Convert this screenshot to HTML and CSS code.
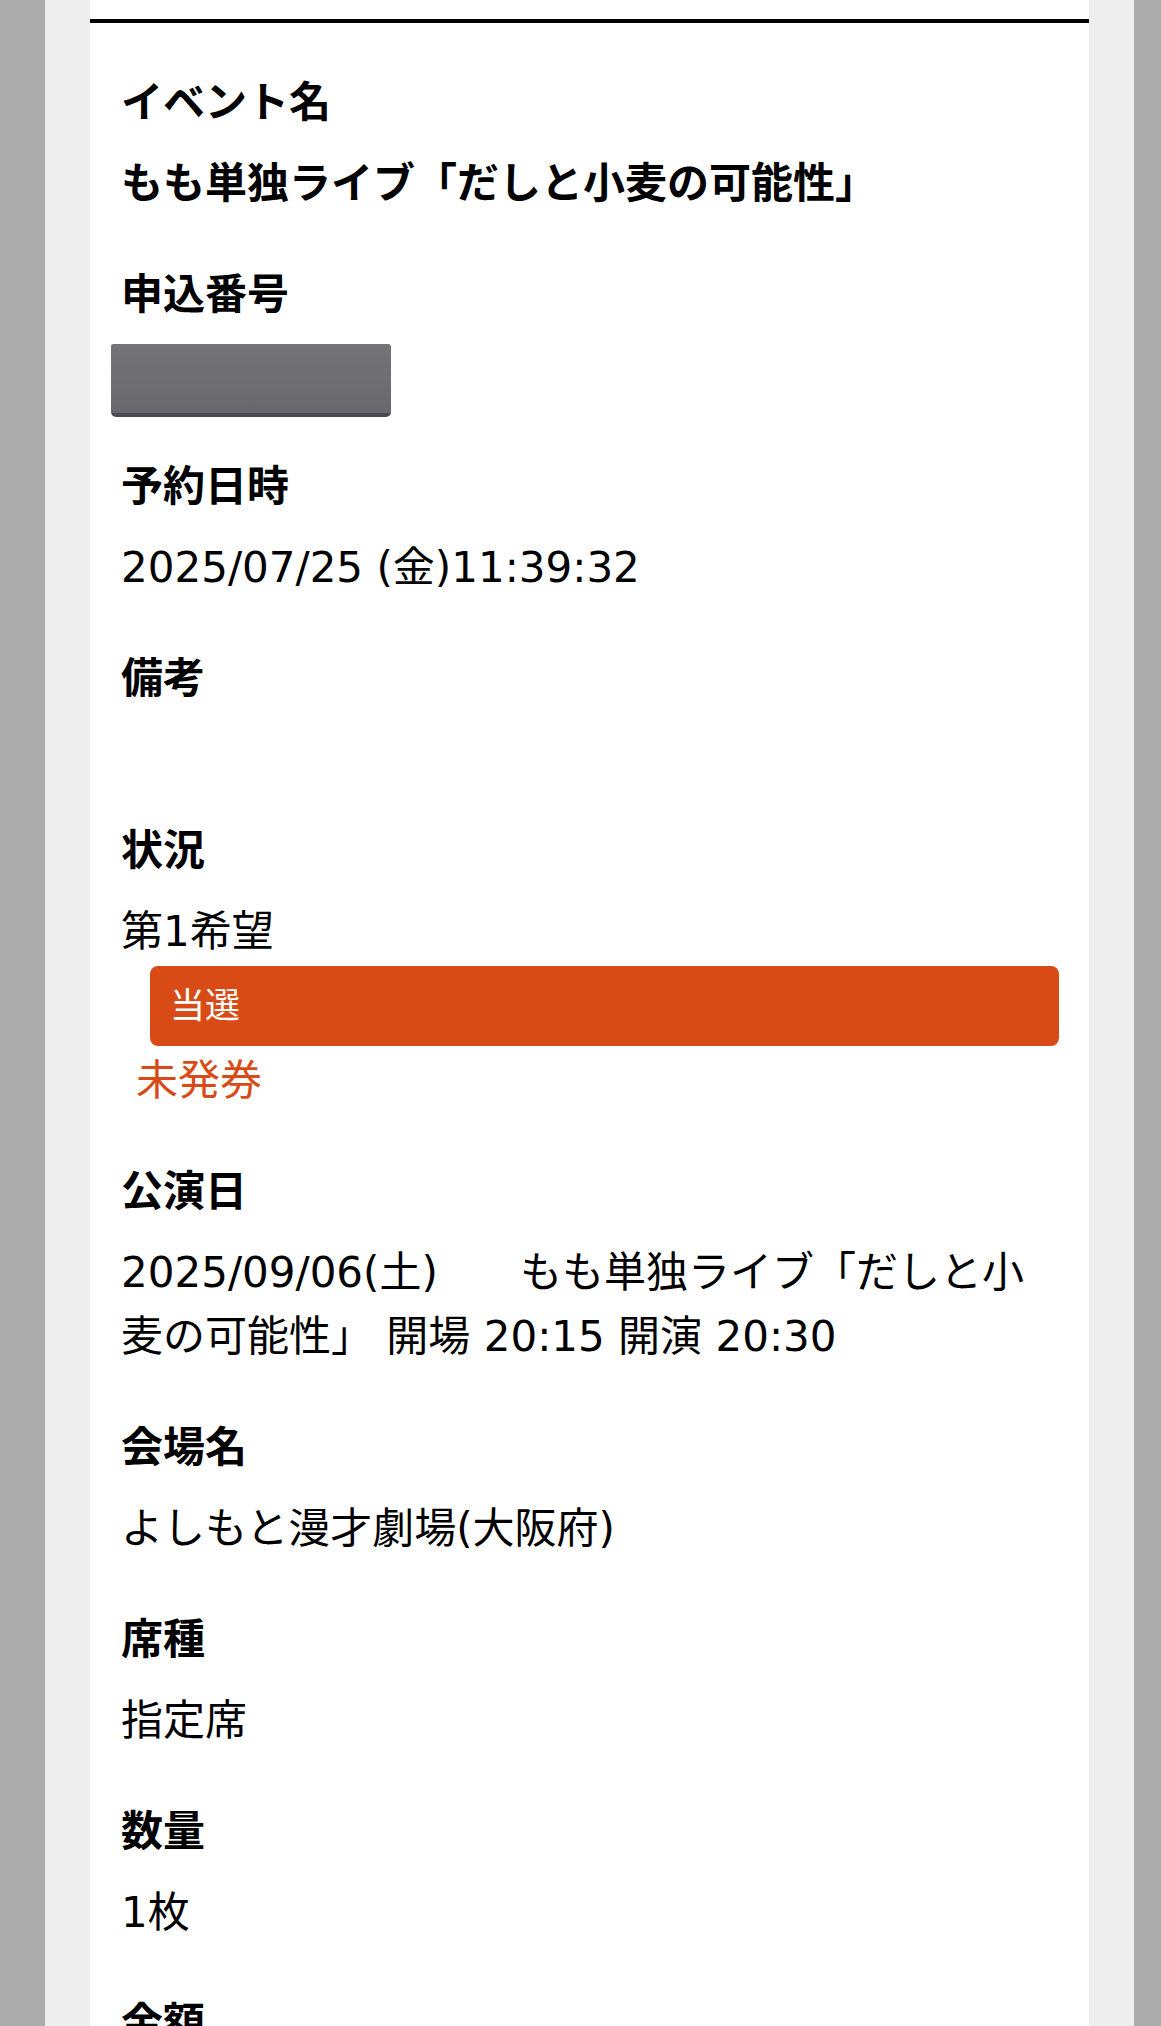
FILE: index.html
```html
<!DOCTYPE html>
<html lang="ja">
<head>
    <meta charset="UTF-8">
    <meta name="viewport" content="width=device-width, initial-scale=1.0">
    <title>申込詳細</title>
    <link rel="stylesheet" href="styles.css">
</head>
<body>
    <div class="frame">
        <div class="shell">
            <div class="sheet">
                <dl class="detail">
                    <div class="detail-item">
                        <dt>イベント名</dt>
                        <dd class="event-title">もも単独ライブ「だしと小麦の可能性」</dd>
                    </div>
                    <div class="detail-item">
                        <dt>申込番号</dt>
                        <dd><div class="redacted"></div></dd>
                    </div>
                    <div class="detail-item">
                        <dt>予約日時</dt>
                        <dd>2025/07/25 (金)11:39:32</dd>
                    </div>
                    <div class="detail-item">
                        <dt>備考</dt>
                        <dd class="empty"></dd>
                    </div>
                    <div class="detail-item">
                        <dt>状況</dt>
                        <dd>
                            <div>第1希望</div>
                            <div class="status-bar">当選</div>
                            <div class="status-note">未発券</div>
                        </dd>
                    </div>
                    <div class="detail-item">
                        <dt>公演日</dt>
                        <dd>2025/09/06(土)　&nbsp;&nbsp;&nbsp;もも単独ライブ「だしと小麦の可能性」 開場 20:15 開演 20:30</dd>
                    </div>
                    <div class="detail-item">
                        <dt>会場名</dt>
                        <dd>よしもと漫才劇場(大阪府)</dd>
                    </div>
                    <div class="detail-item">
                        <dt>席種</dt>
                        <dd>指定席</dd>
                    </div>
                    <div class="detail-item">
                        <dt>数量</dt>
                        <dd>1枚</dd>
                    </div>
                    <div class="detail-item">
                        <dt>金額</dt>
                        <dd>&nbsp;</dd>
                    </div>
                </dl>
            </div>
        </div>
    </div>
</body>
</html>
```
FILE: styles.css
```css
* {
    margin: 0;
    padding: 0;
    box-sizing: border-box;
}

body {
    font-family: "DejaVu Sans", "Noto Sans CJK JP", sans-serif;
    font-size: 42px;
    line-height: 64px;
    color: #000;
    background: #adacad;
}

.frame {
    padding: 0 27px 0 45px;
    min-height: 100vh;
}

.shell {
    background: #eeeeee;
    padding: 0 45px;
    min-height: 100vh;
}

.sheet {
    background: #fff;
    padding-top: 19px;
    min-height: 100vh;
}

.detail {
    border-top: 4px solid #000;
    padding: 48px 30px 0 31px;
}

.detail-item {
    padding-bottom: 47px;
}

.detail dt {
    font-weight: bold;
    margin-bottom: 17px;
}

.detail dd {
    margin: 0;
}

.event-title {
    font-weight: bold;
}

.redacted {
    width: 280px;
    height: 73px;
    margin: 2px 0 -9px -10px;
    background: linear-gradient(180deg, #747478, #69696d);
    border-bottom: 4px solid #4b4b53;
    border-radius: 2px 3px 5px 5px;
}

.empty {
    height: 44px;
}

.status-bar {
    display: flex;
    align-items: center;
    height: 80px;
    margin: 2px 0 0 29px;
    padding-left: 20px;
    background: #d84b16;
    color: #fff;
    font-size: 35px;
    border-radius: 8px;
}

.status-note {
    margin: 3px 0 0 15px;
    color: #d84b16;
}
```
